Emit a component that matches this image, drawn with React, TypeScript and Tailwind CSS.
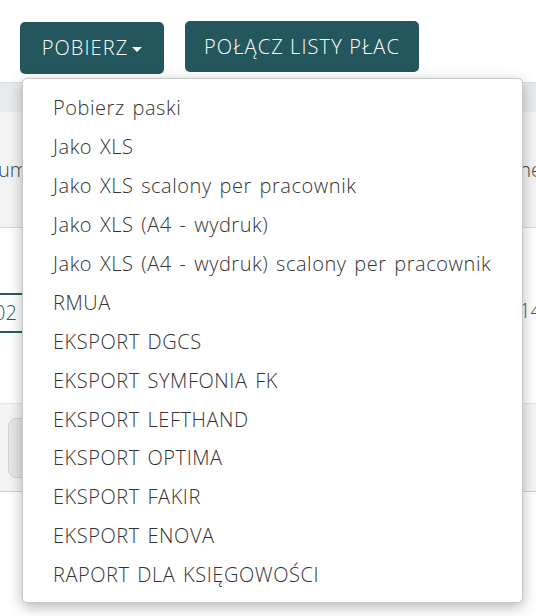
import React from "react";

const items = [
  "Pobierz paski",
  "Jako XLS",
  "Jako XLS scalony per pracownik",
  "Jako XLS (A4 - wydruk)",
  "Jako XLS (A4 - wydruk) scalony per pracownik",
  "RMUA",
  "EKSPORT DGCS",
  "EKSPORT SYMFONIA FK",
  "EKSPORT LEFTHAND",
  "EKSPORT OPTIMA",
  "EKSPORT FAKIR",
  "EKSPORT ENOVA",
  "RAPORT DLA KSIĘGOWOŚCI",
];

export default function App() {
  return (
    <div
      className="relative w-[536px] h-[616px] overflow-hidden bg-white"
      style={{ fontFamily: '"Open Sans", "Noto Sans", sans-serif' }}
    >
      {/* top bar */}
      <div className="h-[82px] flex items-start gap-[21px] pl-5 pt-[21px]">
        <button className="h-[52px] w-[144px] mt-[1px] rounded-[5px] bg-[#24575d] text-white text-[20px] font-light tracking-[1.1px] flex items-center justify-center gap-[4px]">
          POBIERZ
          <span className="inline-block w-0 h-0 border-l-[5.5px] border-r-[5.5px] border-t-[5.5px] border-l-transparent border-r-transparent border-t-white mt-[3px]" />
        </button>
        <button className="h-[51px] w-[234px] rounded-[5px] bg-[#24575d] text-white text-[20px] font-light tracking-[1.1px] flex items-center justify-center">
          POŁĄCZ LISTY PŁAC
        </button>
      </div>

      {/* background table */}
      <div className="flex flex-col">
        <div className="h-[30px] bg-[#e8ebee] border-t border-[#d9dcdf]" />
        <div className="h-[116px] bg-[#f3f3f3] border-b border-[#d6d6d6] flex items-center justify-between text-[20px] font-light text-[#3a4a50]">
          <span className="-ml-[2px]">um</span>
          <span className="mr-[-6px]">ne</span>
        </div>
        <div className="h-[175px] bg-white flex items-center justify-between text-[20px] font-light text-[#2c5a60]">
          <div className="w-[22px] h-[40px] mt-[-6px] border-y-2 border-[#2c5a60] flex items-center overflow-hidden">
            <span className="-ml-[6px]">02</span>
          </div>
          <span className="text-[#555] mr-[-6px] mt-[-10px]">14</span>
        </div>
        <div className="h-[89px] bg-[#f4f4f4] border-t border-[#e4e4e4] border-b border-b-[#d0d0d0] flex items-center pl-[8px]">
          <div className="w-[40px] h-[60px] rounded-[8px] bg-[#e6e6e6] border border-[#d2d2d2]" />
        </div>
        <div className="flex-1 h-[140px] bg-[#f6f6f6]" />
      </div>

      {/* dropdown */}
      <div className="absolute left-[22px] top-[78px] w-[501px] h-[525px] bg-white rounded-[5px] border border-[#c8c8c8] shadow-[0_4px_14px_rgba(0,0,0,0.28)] pt-[10px]">
        {items.map((t) => (
          <div
            key={t}
            className="h-[38.9px] flex items-center pl-[30px] text-[20px] font-light text-[#333] tracking-[0.55px] [word-spacing:2px] whitespace-nowrap"
          >
            {t}
          </div>
        ))}
      </div>
    </div>
  );
}
